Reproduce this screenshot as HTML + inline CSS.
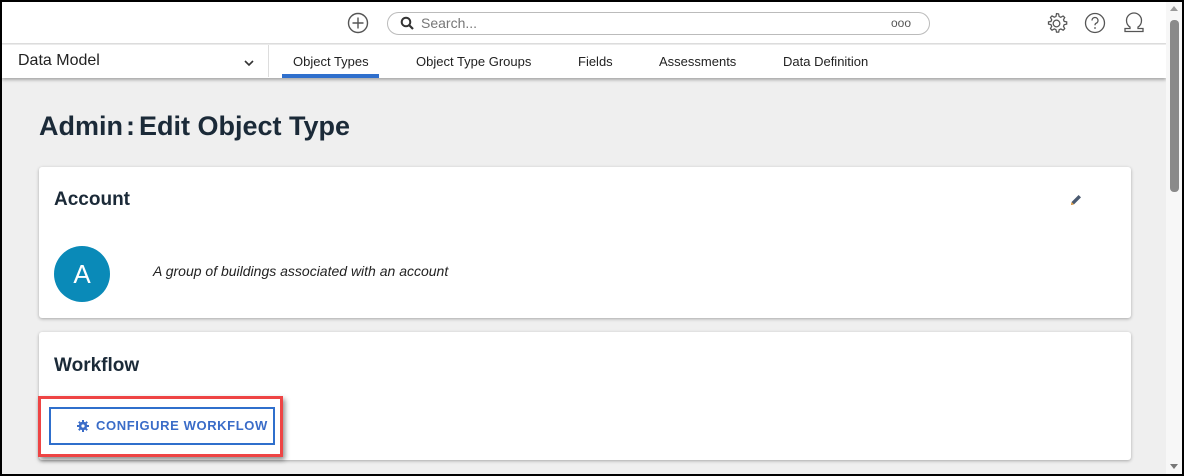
<!DOCTYPE html>
<html><head><style>
*{margin:0;padding:0;box-sizing:border-box}
body{width:1184px;height:476px;overflow:hidden;background:#000;font-family:"Liberation Sans",sans-serif;position:relative}
.page{position:absolute;left:2px;top:2px;width:1180px;height:472px;background:#efefef;overflow:hidden}
.top{position:absolute;left:0;top:0;width:1164px;height:42px;background:#fff;border-bottom:1px solid #ddd}
.nav{position:absolute;left:0;top:43px;width:1164px;height:33px;background:#fff;box-shadow:0 2px 3px rgba(0,0,0,.3)}
.sb{position:absolute;left:1164px;top:0;width:16px;height:472px;background:#f7f7f7}
.thumb{position:absolute;left:1168px;top:18px;width:9px;height:172px;background:#8a8a8a;border-radius:4px}
.abs{position:absolute}
.card{position:absolute;left:37px;width:1092px;background:#fff;border-radius:3px;box-shadow:0 1px 3px rgba(0,0,0,.3)}
.tab{position:absolute;top:9px;font-size:13px;color:#222}
</style></head><body><div class="page">
<div class="top">
<svg class="abs" style="left:345px;top:10px" width="22" height="22" viewBox="0 0 22 22"><circle cx="11" cy="11" r="9.5" fill="none" stroke="#555" stroke-width="1.4"/><path d="M11 5.5v11M5.5 11h11" stroke="#555" stroke-width="1.4"/></svg>
<div class="abs" style="left:385px;top:10px;width:543px;height:23px;border:1px solid #bbb;border-radius:12px"></div>
<svg class="abs" style="left:398px;top:14px" width="14" height="14" viewBox="0 0 14 14"><circle cx="6" cy="6" r="4.3" fill="none" stroke="#333" stroke-width="2"/><path d="M9 9l4 4" stroke="#333" stroke-width="2.2"/></svg>
<div class="abs" style="left:419px;top:13px;font-size:14px;color:#777">Search...</div>
<div class="abs" style="left:889px;top:14px;font-size:12px;color:#555;letter-spacing:0">ooo</div>
<svg class="abs" style="left:1042px;top:9px" width="25" height="25" viewBox="0 0 24 24"><path d="M12 2.5l2 .3.5 2.4 1.6.8 2.2-1.2 1.6 1.4-1.2 2.2.7 1.6 2.4.5v2.1l-2.4.5-.7 1.6 1.2 2.2-1.5 1.5-2.2-1.2-1.6.7-.5 2.4h-2.1l-.5-2.4-1.6-.7-2.2 1.2-1.5-1.5 1.2-2.2-.7-1.6-2.4-.5v-2.1l2.4-.5.7-1.6-1.2-2.2 1.5-1.5 2.2 1.2 1.6-.7.5-2.4z" fill="none" stroke="#555" stroke-width="1.2"/><circle cx="12" cy="12" r="3.2" fill="none" stroke="#555" stroke-width="1.2"/></svg>
<svg class="abs" style="left:1082px;top:10px" width="22" height="22" viewBox="0 0 22 22"><circle cx="11" cy="11" r="9.5" fill="none" stroke="#555" stroke-width="1.3"/><path d="M8 8.5a3 3 0 1 1 4 2.8c-.8.4-1 1-1 2" fill="none" stroke="#555" stroke-width="1.3"/><circle cx="11" cy="16" r=".9" fill="#555"/></svg>
<svg class="abs" style="left:1120px;top:9px" width="24" height="24" viewBox="0 0 24 24"><path d="M8 16c-2.5-1.5-3.5-4-3.5-6.5a7.5 7.5 0 0 1 15 0c0 2.5-1 5-3.5 6.5v1.5h5v3H3v-3h5z" fill="none" stroke="#555" stroke-width="1.3"/></svg>
</div>
<div class="nav">
<div class="abs" style="left:16px;top:7px;font-size:16px;color:#222">Data Model</div>
<svg class="abs" style="left:242px;top:14px" width="10" height="8" viewBox="0 0 10 8"><path d="M1 2l4 4 4-4" fill="none" stroke="#333" stroke-width="1.6"/></svg>
<div class="abs" style="left:266px;top:0;width:1px;height:32px;background:#ddd"></div>
<div class="tab" style="left:291px">Object Types</div>
<div class="abs" style="left:280px;top:29px;width:97px;height:4px;background:#2f6fcc"></div>
<div class="tab" style="left:414px">Object Type Groups</div>
<div class="tab" style="left:576px">Fields</div>
<div class="tab" style="left:657px">Assessments</div>
<div class="tab" style="left:781px">Data Definition</div>
</div>
<div class="abs" style="left:37px;top:109px;font-size:27px;color:#1b2a38;font-weight:bold">Admin<b style="margin:0 4px 0 3px">:</b>Edit Object Type</div>
<div class="card" style="top:165px;height:151px">
<div class="abs" style="left:15px;top:22px;font-size:19px;font-weight:bold;color:#1b2a38">Account</div>
<svg class="abs" style="left:1030px;top:26px" width="14" height="14" viewBox="0 0 14 14"><path d="M2 12l.6-3 7-7 2.4 2.4-7 7z" fill="#4a5a70"/><path d="M2 12l.6-3 2.4 2.4z" fill="#e8a040"/></svg>
<div class="abs" style="left:15px;top:79px;width:56px;height:56px;border-radius:50%;background:#0a8ab8;color:#fff;font-size:26px;text-align:center;line-height:56px">A</div>
<div class="abs" style="left:114px;top:96px;font-size:14px;font-style:italic;color:#222">A group of buildings associated with an account</div>
</div>
<div class="card" style="top:330px;height:128px">
<div class="abs" style="left:15px;top:23px;font-size:19px;font-weight:bold;color:#1b2a38">Workflow</div>
</div>
<div class="abs" style="left:36px;top:394px;width:245px;height:61px;border:3px solid #ee4444;background:#fff;box-shadow:2px 3px 5px rgba(0,0,0,.45)"></div>
<div class="abs" style="left:47px;top:405px;width:226px;height:38px;border:2px solid #2f6fcc;background:#fff"></div>
<svg class="abs" style="left:75px;top:418px" width="12" height="12" viewBox="0 0 12 12"><circle cx="6" cy="6" r="4.2" fill="#3a6cc8"/><path d="M6 0v12M0 6h12M1.8 1.8l8.4 8.4M10.2 1.8l-8.4 8.4" stroke="#3a6cc8" stroke-width="2"/><circle cx="6" cy="6" r="1.6" fill="#fff"/></svg>
<div class="abs" style="left:94px;top:416px;font-size:13px;font-weight:bold;color:#3a6cc8;letter-spacing:0.6px">CONFIGURE WORKFLOW</div>
<div class="sb"></div><div class="thumb"></div>
<div class="abs" style="left:1168px;top:4px;width:0;height:0;border-left:4px solid transparent;border-right:4px solid transparent;border-bottom:5px solid #999"></div>
<div class="abs" style="left:1168px;top:462px;width:0;height:0;border-left:4px solid transparent;border-right:4px solid transparent;border-top:5px solid #777"></div>
</div></body></html>
